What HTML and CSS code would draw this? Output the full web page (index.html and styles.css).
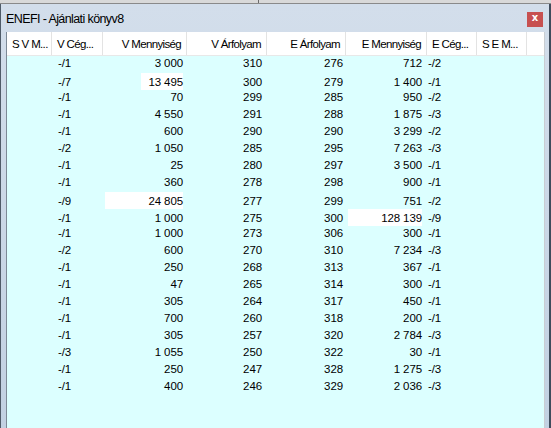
FILE: index.html
```html
<!DOCTYPE html>
<html>
<head>
<meta charset="utf-8">
<link rel="stylesheet" href="styles.css">
</head>
<body>
<div class="screen">
  <div class="topstrip"><div class="topstrip-split"></div></div>
  <div class="window">
    <div class="titlebar">
      <span class="title">ENEFI - Ajánlati könyv8</span>
      <span class="close">x</span>
    </div>
    <div class="client">
      <div class="grid head">
        <div class="h left">S V M...</div>
        <div class="h left">V Cég...</div>
        <div class="h right">V Mennyiség</div>
        <div class="h right">V Árfolyam</div>
        <div class="h right">E Árfolyam</div>
        <div class="h right">E Mennyiség</div>
        <div class="h left">E Cég...</div>
        <div class="h left">S E M...</div>
        <div class="h fill"></div>
      </div>
      <div class="rows" id="rows"></div>
    </div>
  </div>
</div>
<script src="app.js"></script>
</body>
</html>
```

FILE: styles.css
```css
html, body { margin: 0; padding: 0; }
body { background: #dcdcdc; }
.screen {
  width: 551px; height: 428px; overflow: hidden;
  background: #dcdcdc;
  font-family: "Liberation Sans", Arial, sans-serif;
  display: flex; flex-direction: column;
}
.topstrip {
  height: 3px; background: #d9d9d9; border-bottom: 1px solid #8a8a8a;
  display: flex; flex: none;
}
.topstrip-split { width: 258px; border-right: 1px solid #6a6a6a; }
.window {
  flex: 1; display: flex; flex-direction: column;
  border-left: 1px solid #4f5b68;
  border-right: 2px solid #3f4c5c;
  background: linear-gradient(#d3deeb, #c2d1e2);
  min-height: 0;
}
.titlebar {
  height: 28px; flex: none;
  display: flex; align-items: center; justify-content: space-between;
  padding: 0 6px 0 5px;
}
.title {
  font-size: 12.5px; letter-spacing: -0.6px; color: #000;
  padding-top: 2px;
}
.close {
  width: 16px; height: 15px; background: #c75050;
  color: #fff; font-size: 10px; font-weight: bold;
  display: flex; align-items: center; justify-content: center;
  line-height: 1; margin-top: 2px; padding-bottom: 2px; box-sizing: border-box;
  font-family: "DejaVu Sans", sans-serif;
}
.client {
  flex: 1; display: flex; flex-direction: column;
  margin-left: 5px; border-left: 1px solid #7d8996;
  margin-right: 4px; border-right: 1px solid #c9cdd2;
  background: #dcffff;
  min-height: 0;
}
.grid {
  display: grid;
  grid-template-columns: 45px 51px 84px 80px 79px 81px 50px 50px 1fr;
}
.head { background: #fff; height: 23px; border-bottom: 1px solid #e8e8e8; flex: none; }
.h {
  font-size: 11.5px; letter-spacing: -0.65px; color: #000;
  display: flex; align-items: center;
  border-right: 1px solid #e3e3e3;
  white-space: nowrap; overflow: hidden;
  padding-top: 1px;
}
.h.left { padding-left: 5px; }
.h.right { justify-content: flex-end; padding-right: 5px; }
.h.fill { border-right: none; }
.row { height: 17px; }
.c {
  font-size: 11.5px; color: #000; display: flex; align-items: center;
  white-space: nowrap; letter-spacing: -0.1px;
}
.c.r { justify-content: flex-end; padding-right: 4px; }
.c.l { padding-left: 6px; }
.c.l2 { padding-left: 1px; }
.c.r3 { padding-right: 3px; }
.c.r5 { padding-right: 5px; }
.hl {
  background: #fff; height: 17px; display: flex; align-items: center;
  justify-content: flex-end; box-sizing: border-box;
}
```

FILE: app.js
```js
var data = [
  ["-/1","3 000","310","276","712","-/2"],
  ["-/7","13 495","300","279","1 400","-/1"],
  ["-/1","70","299","285","950","-/2"],
  ["-/1","4 550","291","288","1 875","-/3"],
  ["-/1","600","290","290","3 299","-/2"],
  ["-/2","1 050","285","295","7 263","-/3"],
  ["-/1","25","280","297","3 500","-/1"],
  ["-/1","360","278","298","900","-/1"],
  ["-/9","24 805","277","299","751","-/2"],
  ["-/1","1 000","275","300","128 139","-/9"],
  ["-/1","1 000","273","306","300","-/1"],
  ["-/2","600","270","310","7 234","-/3"],
  ["-/1","250","268","313","367","-/1"],
  ["-/1","47","265","314","300","-/1"],
  ["-/1","305","264","317","450","-/1"],
  ["-/1","700","260","318","200","-/1"],
  ["-/1","305","257","320","2 784","-/3"],
  ["-/3","1 055","250","322","30","-/1"],
  ["-/1","250","247","328","1 275","-/3"],
  ["-/1","400","246","329","2 036","-/3"]
];
var hl = { "1-1": 42, "8-1": 78, "9-4": 74 };
var cls = ["l", "r", "r r5", "r r3", "r r5", "l l2"];
var rows = document.getElementById("rows");
data.forEach(function (d, i) {
  var row = document.createElement("div");
  row.className = "grid row";
  var e = document.createElement("div"); e.className = "c"; row.appendChild(e);
  d.forEach(function (v, j) {
    var c = document.createElement("div");
    c.className = "c " + cls[j];
    var key = i + "-" + j;
    if (hl[key]) {
      var s = document.createElement("span");
      s.className = "hl";
      s.style.width = hl[key] + "px";
      s.textContent = v;
      c.appendChild(s);
    } else {
      c.textContent = v;
    }
    row.appendChild(c);
  });
  for (var k = 0; k < 3; k++) { var f = document.createElement("div"); f.className = "c"; row.appendChild(f); }
  rows.appendChild(row);
});
```
